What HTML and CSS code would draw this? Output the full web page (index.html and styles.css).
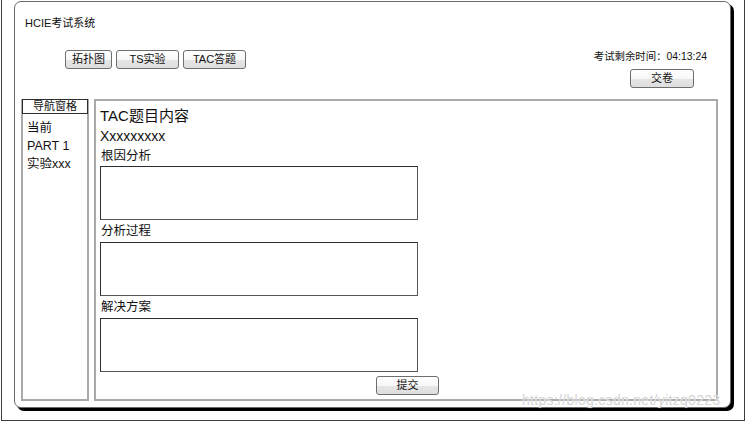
FILE: index.html
```html
<!DOCTYPE html>
<html lang="zh-CN">
<head>
<meta charset="utf-8">
<title>HCIE考试系统</title>
<link rel="stylesheet" href="styles.css">
</head>
<body>
<div class="frame">
  <div class="window">
    <div class="app-title">HCIE考试系统</div>
    <div class="toolbar">
      <div class="tabs">
        <button class="btn tab-1">拓扑图</button>
        <button class="btn tab-2">TS实验</button>
        <button class="btn tab-3">TAC答题</button>
      </div>
      <div class="exam-side">
        <div class="timer">考试剩余时间：04:13:24</div>
        <button class="btn hand-in">交卷</button>
      </div>
    </div>
    <div class="workspace">
      <div class="nav">
        <div class="nav-head">导航窗格</div>
        <div class="nav-list">
          <div class="nav-item">当前</div>
          <div class="nav-item">PART 1</div>
          <div class="nav-item">实验xxx</div>
        </div>
      </div>
      <div class="main">
        <div class="q-title">TAC题目内容</div>
        <div class="q-text">Xxxxxxxxx</div>
        <div class="field-label first">根因分析</div>
        <div class="answer-box"></div>
        <div class="field-label">分析过程</div>
        <div class="answer-box"></div>
        <div class="field-label">解决方案</div>
        <div class="answer-box"></div>
        <button class="btn submit">提交</button>
      </div>
    </div>
  </div>
</div>
<div class="watermark">https://blog.csdn.net/yitzq0223</div>
</body>
</html>
```

FILE: styles.css
```css
html, body {
  margin: 0;
  padding: 0;
  background: #ffffff;
}
body {
  width: 746px;
  height: 421px;
  position: relative;
  overflow: hidden;
  font-family: "Liberation Sans", "Noto Sans CJK SC", sans-serif;
  color: #111;
}
.frame {
  box-sizing: border-box;
  margin-left: 1px;
  width: 744px;
  height: 421px;
  border: 1px solid #3c3c3c;
  border-top: none;
  padding: 1px 0 0 12px;
}
.window {
  box-sizing: border-box;
  width: 717px;
  height: 407px;
  border: 1px solid #6a6a6a;
  border-radius: 7px;
  box-shadow: 3px 3px 0 0 #000;
  background: #fff;
  display: flex;
  flex-direction: column;
}
.app-title {
  font-size: 11px;
  line-height: 14px;
  margin: 14px 0 0 10px;
  color: #111;
}
.toolbar {
  display: flex;
  justify-content: space-between;
  align-items: flex-start;
  padding: 0 22px 0 50px;
  margin-top: 19px;
}
.tabs {
  display: flex;
  gap: 4px;
  padding-top: 1px;
}
.btn {
  box-sizing: border-box;
  height: 19px;
  padding: 0;
  border: 1px solid #6e6e6e;
  border-radius: 3px;
  background: linear-gradient(#ffffff 0%, #f7f7f7 50%, #e6e6e6 51%, #dedede 100%);
  font-family: "Liberation Sans", "Noto Sans CJK SC", sans-serif;
  font-size: 11px;
  line-height: 17px;
  color: #111;
  text-align: center;
}
.tab-1 { width: 47px; }
.tab-2 { width: 63px; }
.tab-3 { width: 63px; }
.exam-side {
  display: flex;
  flex-direction: column;
  align-items: flex-end;
}
.timer {
  font-size: 10.4px;
  line-height: 14px;
  margin-top: 1px;
  margin-right: 1px;
}
.hand-in {
  width: 64px;
  margin-top: 5px;
  margin-right: 14px;
}
.workspace {
  flex: 1;
  display: flex;
  gap: 5px;
  padding: 11px 12px 6px 6px;
}
.nav {
  box-sizing: border-box;
  width: 68px;
  border: 2px solid #a9a9a9;
  border-top: none;
  display: flex;
  flex-direction: column;
}
.nav-head {
  box-sizing: border-box;
  height: 15px;
  margin: 0 -1px 0 -1px;
  border: 1px solid #2e2e2e;
  font-size: 11px;
  line-height: 13px;
  text-align: center;
  color: #111;
}
.nav-list {
  padding: 5px 0 0 4px;
}
.nav-item {
  font-size: 12.5px;
  line-height: 18px;
}
.main {
  box-sizing: border-box;
  flex: 1;
  border: 2px solid #a9a9a9;
  padding: 5px 0 0 4px;
  display: flex;
  flex-direction: column;
  align-items: flex-start;
}
.q-title {
  font-size: 15px;
  line-height: 20px;
}
.q-text {
  font-size: 14px;
  line-height: 20px;
}
.field-label {
  font-size: 12.5px;
  line-height: 22px;
  padding-left: 1px;
}
.field-label.first {
  line-height: 20px;
}
.answer-box {
  box-sizing: border-box;
  width: 318px;
  height: 54px;
  border: 1px solid #2e2e2e;
  border-right-color: #555;
  border-bottom-color: #555;
  background: #fff;
}
.submit {
  width: 63px;
  margin: 4px 0 0 276px;
}
.watermark {
  position: absolute;
  left: 522px;
  top: 392px;
  font-family: "Liberation Sans", sans-serif;
  font-size: 14px;
  line-height: 16px;
  color: #d4d4d4;
  text-shadow: 0 0 1px #fff;
  letter-spacing: 0.3px;
}
```
